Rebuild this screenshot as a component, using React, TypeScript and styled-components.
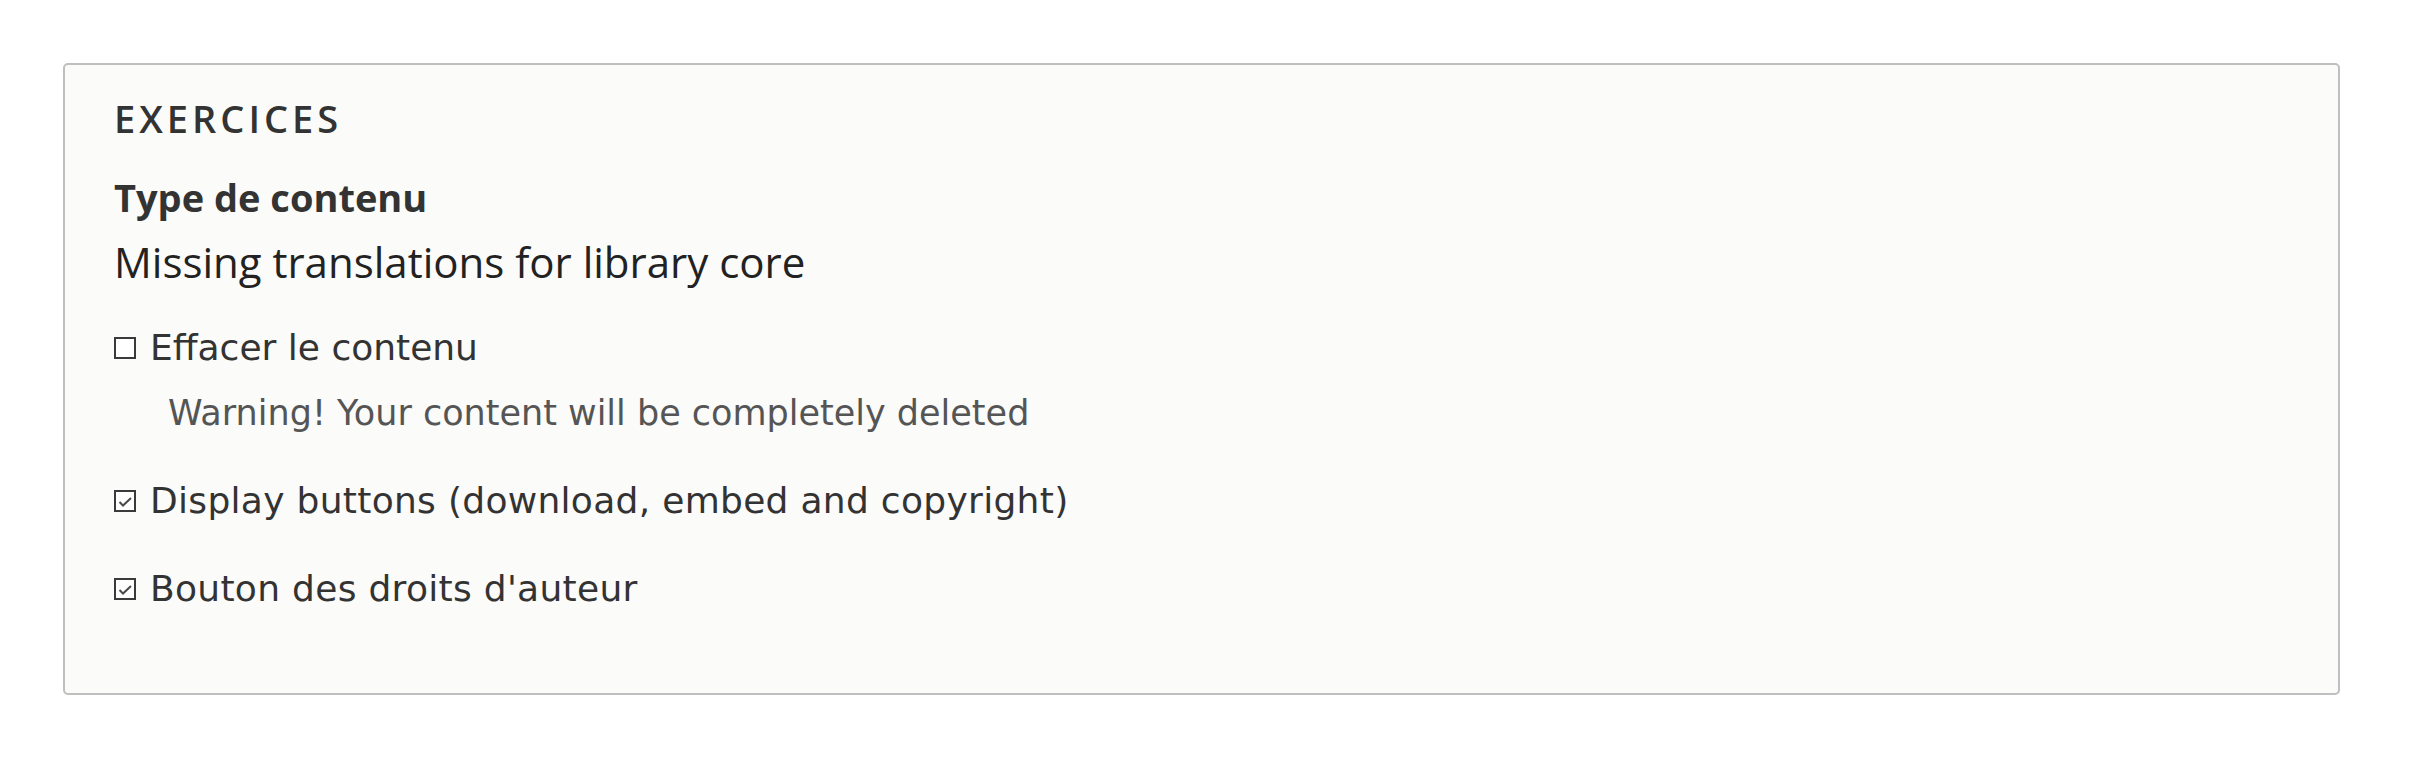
import React from "react";
import styled, { createGlobalStyle } from "styled-components";

const GlobalStyle = createGlobalStyle`
  body {
    margin: 0;
    background: #ffffff;
  }
`;

const Page = styled.div`
  padding: 63px 78px 0 63px;
`;

const Panel = styled.fieldset`
  margin: 0;
  height: 632px;
  box-sizing: border-box;
  border: 2px solid #bfbfbf;
  border-radius: 5px;
  background: #fbfbf9;
  padding: 34px 49px 0 49px;
  display: flex;
  flex-direction: column;
`;

const Legend = styled.div`
  font-family: "Open Sans", "Noto Sans", sans-serif;
  font-weight: 600;
  font-size: 38px;
  line-height: 38px;
  letter-spacing: 4px;
  color: #333333;
  text-transform: uppercase;
`;

const FieldLabel = styled.div`
  margin-top: 41px;
  font-family: "Open Sans", "Noto Sans", sans-serif;
  font-weight: 700;
  font-size: 38px;
  line-height: 38px;
  color: #333333;
`;

const FieldValue = styled.div`
  margin-top: 25px;
  font-family: "Open Sans", "Noto Sans", sans-serif;
  font-size: 42px;
  line-height: 42px;
  color: #222222;
`;

const CheckRow = styled.label<{ $gap: number }>`
  margin-top: ${(p) => p.$gap}px;
  display: flex;
  align-items: center;
  gap: 14px;
  font-family: "DejaVu Sans", sans-serif;
  font-size: 36px;
  line-height: 36px;
  color: #333333;
`;

const Text = styled.span<{ $wide?: boolean }>`
  letter-spacing: ${(p) => (p.$wide ? "0.3px" : "0")};
`;

const Box = styled.span`
  flex: none;
  width: 22px;
  height: 22px;
  box-sizing: border-box;
  border: 2px solid #3a3a3a;
  background: #ffffff;
  position: relative;
`;

const Description = styled.div`
  margin-top: 30px;
  padding-left: 54px;
  font-family: "DejaVu Sans", sans-serif;
  font-size: 35px;
  line-height: 35px;
  color: #555555;
`;

const Mark = styled.svg`
  position: absolute;
  left: 2px;
  top: 4px;
`;

const Check = () => (
  <Mark width="15" height="12" viewBox="0 0 15 12">
    <path d="M1.5 6 L5 9.5 L13 2" fill="none" stroke="#4a4a4a" strokeWidth="2" />
  </Mark>
);

const Checkbox: React.FC<{ checked?: boolean; label: string; gap: number }> = ({ checked, label, gap }) => (
  <CheckRow $gap={gap}>
    <Box>{checked && <Check />}</Box>
    <Text $wide={checked}>{label}</Text>
  </CheckRow>
);

export default function App() {
  return (
    <Page>
      <GlobalStyle />
      <Panel>
        <Legend>Exercices</Legend>
        <FieldLabel>Type de contenu</FieldLabel>
        <FieldValue>Missing translations for library core</FieldValue>
        <Checkbox label="Effacer le contenu" gap={47} />
        <Description>Warning! Your content will be completely deleted</Description>
        <Checkbox checked label="Display buttons (download, embed and copyright)" gap={52} />
        <Checkbox checked label="Bouton des droits d'auteur" gap={52} />
      </Panel>
    </Page>
  );
}
